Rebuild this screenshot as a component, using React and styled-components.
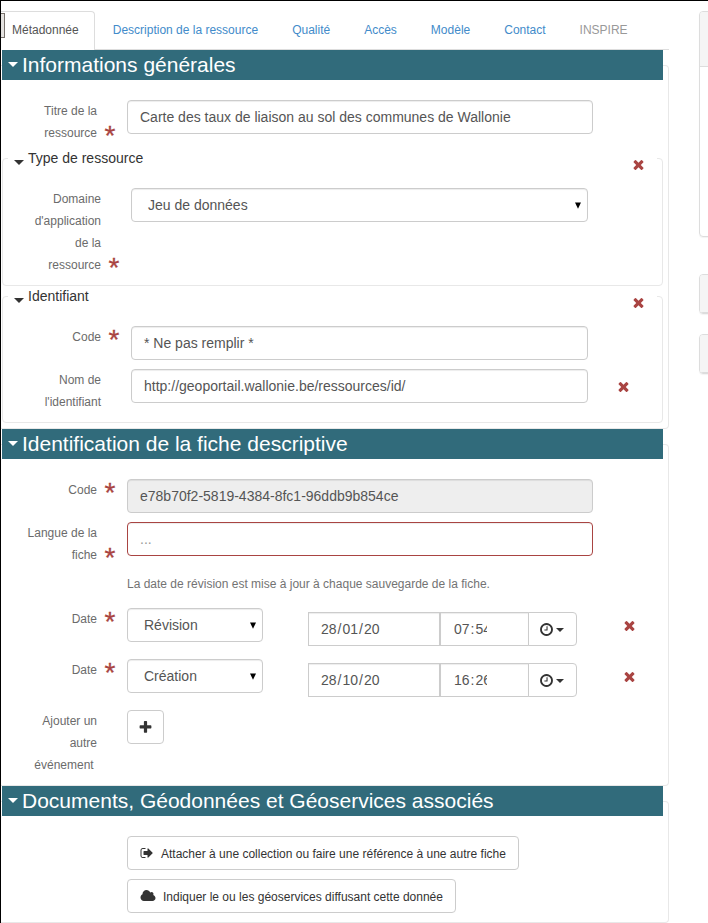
import React from 'react';
import styled, { createGlobalStyle, css } from 'styled-components';

const GlobalStyle = createGlobalStyle`
  *, *::before, *::after { box-sizing: border-box; }
  html, body { margin: 0; padding: 0; background: #fff; overflow: hidden; }
  body { font-family: "Liberation Sans", Arial, Helvetica, sans-serif; font-size: 14px; line-height: 20px; color: #333; }
`;

const danger = '#a94442';

const Page = styled.div`
  position: relative;
  display: flex;
  gap: 30px;
  width: 708px;
  height: 923px;
  border-top: 1px solid #000;
  border-left: 1px solid #000;
  overflow: hidden;
`;

const Main = styled.main`
  flex: 0 0 668px;
`;

const EdgeHandle = styled.div`
  position: absolute;
  left: -1px;
  top: 12px;
  width: 5px;
  height: 25px;
  background: #e4e2e0;
  border: 1px solid #77716c;
  border-left-color: #000;
`;

const Tabs = styled.nav`
  display: flex;
  align-items: stretch;
  gap: 2px;
  height: 49px;
  padding-top: 10px;
  border-bottom: 1px solid #ddd;
`;

const Tab = styled.a`
  display: flex;
  align-items: center;
  padding: 0 16px 1px;
  font-size: 12px;
  white-space: nowrap;
  color: ${(p) => (p.$muted ? '#999' : '#428bca')};
  ${(p) => p.$active && css`
    color: #555;
    background: #fff;
    margin-bottom: -1px;
    padding: 0 15px 2px 11px;
    border: 1px solid #ddd;
    border-left: 0;
    border-bottom: 0;
    border-radius: 0 4px 0 0;
  `}
`;

const Section = styled.fieldset`
  margin: 0;
  min-width: 0;
  padding: 20px 0 ${(p) => p.$bottom}px 1px;
  border: 1px solid #e8e8e8;
  border-left: 0;
  border-radius: 0 4px 4px 0;
`;

const SectionTitle = styled.legend`
  display: flex;
  align-items: center;
  width: 661px;
  height: 30px;
  padding: 0 0 0 6px;
  gap: 4px;
  color: #fff;
  background: #316b7b;
  font-size: 21px;
  line-height: 30px;
`;

const Group = styled.fieldset`
  margin: 0;
  min-width: 0;
  width: 661px;
  padding: 20px 0 9px;
  border: 1px solid #e8e8e8;
  border-radius: 4px;
`;

const GroupTitle = styled.legend`
  display: flex;
  align-items: center;
  width: 649px;
  height: 20px;
  margin-left: 5px;
  padding: 0 11px 0 6px;
  gap: 4px;
  font-size: 14px;
`;

const TitleText = styled.span`
  flex: 1;
`;

const Caret = styled.span`
  width: 0;
  height: 0;
  border: solid transparent;
  border-width: ${(p) => p.$size}px ${(p) => p.$size}px 0;
  border-top-color: currentColor;
  margin-top: ${(p) => p.$drop || 0}px;
`;

const Rows = styled.div`
  display: flex;
  flex-direction: column;
  gap: ${(p) => p.$gap ?? 9}px;
  padding-bottom: ${(p) => p.$after || 0}px;
`;

const Row = styled.div`
  display: flex;
  align-items: flex-start;
`;

const Label = styled.label`
  display: flex;
  align-items: flex-end;
  justify-content: flex-end;
  flex: 0 0 ${(p) => (p.$nested ? 128 : 125)}px;
  color: #6b6b6b;
  font-size: 12px;
  line-height: 22px;
`;

const LabelText = styled.span`
  width: ${(p) => (p.$nested ? 75 : 80)}px;
  text-align: right;
  white-space: pre-wrap;
`;

const StarSlot = styled.span`
  width: 30px;
  height: 22px;
  padding-left: 7.5px;
  color: ${danger};
  font-size: 28px;
  line-height: 28px;
  -webkit-text-stroke: 0.3px ${danger};
`;

const Field = styled.div`
  display: flex;
  align-items: center;
  width: ${(p) => p.$width}px;
  height: 34px;
  padding: 0 6px 0 ${(p) => (p.$select ? 16 : 12)}px;
  border: 1px solid ${(p) => (p.$invalid ? danger : '#ccc')};
  border-radius: 4px;
  background: ${(p) => (p.$disabled ? '#eee' : '#fff')};
  color: ${(p) => (p.$placeholder ? '#999' : '#555')};
  box-shadow: inset 0 1px 1px rgba(0, 0, 0, 0.075);
`;

const FieldText = styled.span`
  flex: 1;
  white-space: nowrap;
`;

const RemoveButton = styled.button`
  display: flex;
  padding: 0;
  border: 0;
  background: none;
  color: ${danger};
  margin: ${(p) => p.$margin || '0'};
`;

const Button = styled.button`
  display: flex;
  align-items: center;
  height: 34px;
  padding: 0 12px;
  gap: 7px;
  border: 1px solid #ccc;
  border-radius: 4px;
  background: #fff;
  color: #333;
  font: 12px/20px "Liberation Sans", Arial, sans-serif;
  white-space: nowrap;
`;

const ButtonText = styled.span`
  padding-top: 2px;
`;

const AddButton = styled(Button)`
  justify-content: center;
  width: 37px;
  padding: 0;
`;

const Help = styled.p`
  margin: 8px 0 14px 125px;
  font-size: 12px;
  line-height: 20px;
  color: #737373;
`;

const DateGroup = styled.div`
  display: flex;
  margin: 4px 0 0 45px;
  width: 269px;
  height: 34px;
`;

const DateCell = styled.div`
  display: flex;
  align-items: center;
  width: ${(p) => p.$width}px;
  padding-left: ${(p) => p.$inset}px;
  border: 1px solid #ccc;
  margin-right: ${(p) => (p.$joined ? -1 : 0)}px;
  color: #555;
  box-shadow: inset 0 1px 1px rgba(0, 0, 0, 0.075);
`;

const Clip = styled.span`
  display: flex;
  gap: 1px;
  width: ${(p) => p.$width}px;
  overflow: hidden;
`;

const ClockButton = styled(Button)`
  width: 49px;
  padding: 0 0 0 10px;
  gap: 2px;
  border-radius: 0 4px 4px 0;
`;

const Side = styled.aside`
  flex: 0 0 300px;
  padding-top: 10px;
`;

const Panel = styled.div`
  height: ${(p) => p.$height}px;
  margin-bottom: ${(p) => p.$after}px;
  border: 1px solid #ddd;
  border-radius: 4px;
  box-shadow: 0 1px 1px rgba(0, 0, 0, 0.05);
  overflow: hidden;
`;

const PanelHeading = styled.div`
  height: ${(p) => p.$height}px;
  background: #f5f5f5;
  border-bottom: 1px solid #ddd;
`;

const icons = {
  times: 'M1490 1322q0 40-28 68l-136 136q-28 28-68 28t-68-28l-294-294-294 294q-28 28-68 28t-68-28l-136-136q-28-28-28-68t28-68l294-294-294-294q-28-28-28-68t28-68l136-136q28-28 68-28t68 28l294 294 294-294q28-28 68-28t68 28l136 136q28 28 28 68t-28 68l-294 294 294 294q28 28 28 68z',
  plus: 'M1600 736v192q0 40-28 68t-68 28h-416v416q0 40-28 68t-68 28h-192q-40 0-68-28t-28-68v-416h-416q-40 0-68-28t-28-68v-192q0-40 28-68t68-28h416v-416q0-40 28-68t68-28h192q40 0 68 28t28 68v416h416q40 0 68 28t28 68z',
  clock: 'M1024 544v448q0 14-9 23t-23 9h-320q-14 0-23-9t-9-23v-64q0-14 9-23t23-9h224v-352q0-14 9-23t23-9h64q14 0 23 9t9 23zm416 352q0-148-73-273t-198-198-273-73-273 73-198 198-73 273 73 273 198 198 273 73 273-73 198-198 73-273zm224 0q0 209-103 385.5t-279.5 279.5-385.5 103-385.5-103-279.5-279.5-103-385.5 103-385.5 279.5-279.5 385.5-103 385.5 103 279.5 279.5 103 385.5z',
  signOut: 'M704 1440q0 4 1 20t.5 26.5-3 23.5-10 19.5-20.5 6.5h-320q-119 0-203.5-84.5t-84.5-203.5v-704q0-119 84.5-203.5t203.5-84.5h320q13 0 22.5 9.5t9.5 22.5q0 4 1 20t.5 26.5-3 23.5-10 19.5-20.5 6.5h-320q-66 0-113 47t-47 113v704q0 66 47 113t113 47h312l11.5 1 11.5 3 8 5.5 7 9 2 13.5zm928-544q0 26-19 45l-544 544q-19 19-45 19t-45-19-19-45v-288h-448q-26 0-45-19t-19-45v-384q0-26 19-45t45-19h448v-288q0-26 19-45t45-19 45 19l544 544q19 19 19 45z',
  cloud: 'M1984 1152q0 159-112.5 271.5t-271.5 112.5h-1088q-185 0-316.5-131.5t-131.5-316.5q0-132 71-241.5t187-163.5q-2-28-2-43 0-212 150-362t362-150q158 0 286.5 88t187.5 230q70-62 166-62 106 0 181 75t75 181q0 75-41 138 129 30 213 134.5t84 239.5z',
};

function Icon({ name, width = 14, height = 14, viewBox = '0 0 1792 1792' }) {
  return (
    <svg width={width} height={height} viewBox={viewBox} fill="currentColor" aria-hidden="true">
      <path d={icons[name]} />
    </svg>
  );
}

function Remove({ margin }) {
  return (
    <RemoveButton $margin={margin} aria-label="Supprimer">
      <Icon name="times" width={15} height={15} />
    </RemoveButton>
  );
}

function Arrow() {
  return (
    <svg width="6" height="7" viewBox="0 0 6 7" aria-hidden="true">
      <path d="M0 .5h6L3 6.8z" fill="#000" />
    </svg>
  );
}

function FormRow({ label, required, nested, children }) {
  return (
    <Row>
      <Label $nested={nested}>
        <LabelText $nested={nested}>{label}</LabelText>
        <StarSlot>{required ? '*' : ''}</StarSlot>
      </Label>
      {children}
    </Row>
  );
}

function SelectField({ width, children }) {
  return (
    <Field $width={width} $select>
      <FieldText>{children}</FieldText>
      <Arrow />
    </Field>
  );
}

function InputField({ children, ...rest }) {
  return (
    <Field {...rest}>
      <FieldText>{children}</FieldText>
    </Field>
  );
}

function SectionBlock({ title, bottom, children }) {
  return (
    <Section $bottom={bottom}>
      <SectionTitle>
        <Caret $size={5} $drop={-2} />
        <TitleText>{title}</TitleText>
      </SectionTitle>
      {children}
    </Section>
  );
}

function GroupBlock({ title, children }) {
  return (
    <Group>
      <GroupTitle>
        <Caret $size={5} $drop={8} />
        <TitleText>{title}</TitleText>
        <Remove margin="13px 0 0" />
      </GroupTitle>
      <Rows>{children}</Rows>
    </Group>
  );
}

function Segments({ parts }) {
  return parts.map((part, i) => <span key={i}>{part}</span>);
}

function DateRow({ kind, date, time }) {
  return (
    <FormRow label="Date" required>
      <SelectField width={136}>{kind}</SelectField>
      <DateGroup>
        <DateCell $width={132} $inset={12}>
          <Clip $width={59}><Segments parts={date} /></Clip>
        </DateCell>
        <DateCell $width={89} $inset={13} $joined>
          <Clip $width={33}><Segments parts={time} /></Clip>
        </DateCell>
        <ClockButton aria-label="Heure">
          <Icon name="clock" width={15} height={15} />
          <Caret $size={4} $drop={2} />
        </ClockButton>
      </DateGroup>
      <Remove margin="9.5px 0 0 45px" />
    </FormRow>
  );
}

const tabs = ['Description de la ressource', 'Qualité', 'Accès', 'Modèle', 'Contact'];

export default function App() {
  return (
    <>
      <GlobalStyle />
      <Page>
        <Main>
          <Tabs>
            <Tab $active>Métadonnée</Tab>
            {tabs.map((tab) => <Tab key={tab}>{tab}</Tab>)}
            <Tab $muted>INSPIRE</Tab>
          </Tabs>

          <SectionBlock title="Informations générales" bottom={5}>
            <Rows $after={4}>
              <FormRow label="Titre de la ressource" required>
                <InputField $width={466}>Carte des taux de liaison au sol des communes de Wallonie</InputField>
              </FormRow>
            </Rows>
            <GroupBlock title="Type de ressource">
              <FormRow label="Domaine d'application de la ressource" required nested>
                <SelectField width={457}>Jeu de données</SelectField>
              </FormRow>
            </GroupBlock>
            <GroupBlock title="Identifiant">
              <FormRow label="Code" required nested>
                <InputField $width={457}>* Ne pas remplir *</InputField>
              </FormRow>
              <FormRow label="Nom de l'identifiant" nested>
                <InputField $width={457}>http://geoportail.wallonie.be/ressources/id/</InputField>
                <Remove margin="9.5px 0 0 28px" />
              </FormRow>
            </GroupBlock>
          </SectionBlock>

          <SectionBlock title="Identification de la fiche descriptive" bottom={9}>
            <Rows>
              <FormRow label="Code" required>
                <InputField $width={466} $disabled>e78b70f2-5819-4384-8fc1-96ddb9b854ce</InputField>
              </FormRow>
              <FormRow label="Langue de la fiche" required>
                <InputField $width={466} $invalid $placeholder>...</InputField>
              </FormRow>
            </Rows>
            <Help>La date de révision est mise à jour à chaque sauvegarde de la fiche.</Help>
            <Rows $gap={13}>
              <DateRow kind="Révision" date={['28', '/', '01', '/', '2015']} time={['07', ':', '54']} />
              <DateRow kind="Création" date={['28', '/', '10', '/', '2014']} time={['16', ':', '26']} />
              <FormRow label={'Ajouter un autre événement\u00a0'}>
                <AddButton aria-label="Ajouter"><Icon name="plus" width={15} height={15} /></AddButton>
              </FormRow>
            </Rows>
          </SectionBlock>

          <SectionBlock title="Documents, Géodonnées et Géoservices associés" bottom={9}>
            <Rows>
              <FormRow>
                <Button>
                  <Icon name="signOut" />
                  <ButtonText>Attacher à une collection ou faire une référence à une autre fiche</ButtonText>
                </Button>
              </FormRow>
              <FormRow>
                <Button>
                  <Icon name="cloud" width={16} viewBox="0 0 2048 1792" />
                  <ButtonText>Indiquer le ou les géoservices diffusant cette donnée</ButtonText>
                </Button>
              </FormRow>
            </Rows>
          </SectionBlock>
        </Main>

        <Side>
          <Panel $height={226} $after={37}><PanelHeading $height={55} /></Panel>
          <Panel $height={40} $after={20}><PanelHeading $height={38} /></Panel>
          <Panel $height={40} $after={0}><PanelHeading $height={38} /></Panel>
        </Side>
        <EdgeHandle />
      </Page>
    </>
  );
}
